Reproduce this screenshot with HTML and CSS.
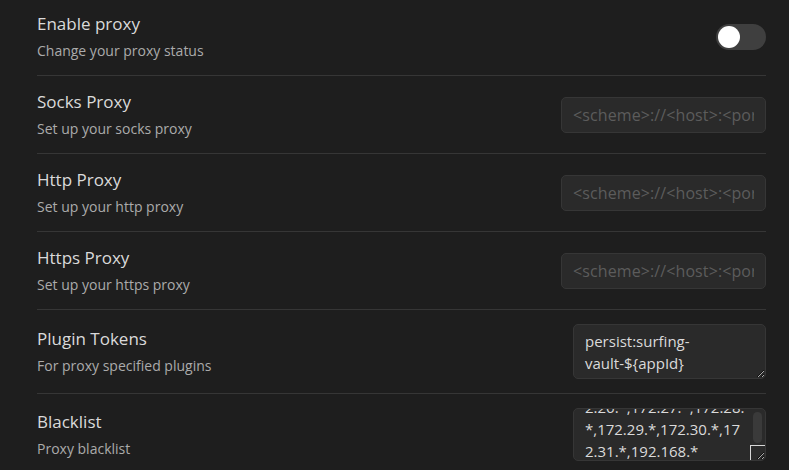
FILE: index.html
```html
<!DOCTYPE html>
<html lang="en">
<head>
  <meta charset="UTF-8">
  <meta name="viewport" content="width=device-width, initial-scale=1.0">
  <title>Proxy Settings</title>
  <link rel="stylesheet" href="styles.css">
</head>
<body>
  <div class="settings">
    <div class="setting-item first">
      <div class="setting-item-info">
        <div class="setting-item-name">Enable proxy</div>
        <div class="setting-item-description">Change your proxy status</div>
      </div>
      <div class="setting-item-control">
        <div class="checkbox-container"><span class="knob"></span></div>
      </div>
    </div>

    <div class="setting-item">
      <div class="setting-item-info">
        <div class="setting-item-name">Socks Proxy</div>
        <div class="setting-item-description">Set up your socks proxy</div>
      </div>
      <div class="setting-item-control">
        <input type="text" placeholder="<scheme>://<host>:<port>">
      </div>
    </div>

    <div class="setting-item">
      <div class="setting-item-info">
        <div class="setting-item-name">Http Proxy</div>
        <div class="setting-item-description">Set up your http proxy</div>
      </div>
      <div class="setting-item-control">
        <input type="text" placeholder="<scheme>://<host>:<port>">
      </div>
    </div>

    <div class="setting-item">
      <div class="setting-item-info">
        <div class="setting-item-name">Https Proxy</div>
        <div class="setting-item-description">Set up your https proxy</div>
      </div>
      <div class="setting-item-control">
        <input type="text" placeholder="<scheme>://<host>:<port>">
      </div>
    </div>

    <div class="setting-item">
      <div class="setting-item-info">
        <div class="setting-item-name">Plugin Tokens</div>
        <div class="setting-item-description">For proxy specified plugins</div>
      </div>
      <div class="setting-item-control">
        <textarea class="tokens">persist:surfing-vault-${appId}</textarea>
      </div>
    </div>

    <div class="setting-item">
      <div class="setting-item-info">
        <div class="setting-item-name">Blacklist</div>
        <div class="setting-item-description">Proxy blacklist</div>
      </div>
      <div class="setting-item-control">
        <div class="textarea-wrap">
          <textarea class="blacklist" id="blacklist">localhost,127.*,10.*,172.16.*,172.17.*,172.18.*,172.19.*,172.20.*,172.21.*,172.22.*,172.23.*,172.24.*,172.25.*,172.26.*,172.27.*,172.28.*,172.29.*,172.30.*,172.31.*,192.168.*</textarea>
          <span class="scroll-thumb"></span>
          <span class="scroll-corner"></span>
        </div>
      </div>
    </div>
  </div>

  <script>
    // keep the blacklist scrolled near the end, like after editing
    const blacklist = document.getElementById("blacklist");
    blacklist.scrollTop = blacklist.scrollHeight - blacklist.clientHeight - 7;
    blacklist.scrollLeft = 0;
  </script>
</body>
</html>
```

FILE: styles.css
```css
/* General styles */
html, body {
  height: 100%;
}

body {
  margin: 0;
  background-color: #1e1e1e;
  color: #dadada;
  font-family: "Open Sans", "Noto Sans", sans-serif;
  overflow: hidden;
  color-scheme: dark;
}

.settings {
  padding: 0 23px 0 37px;
}

/* Setting rows */
.setting-item {
  display: flex;
  align-items: center;
  padding: 14px 0;
  border-top: 1px solid #363636;
}

.setting-item.first {
  border-top: none;
  padding-top: 12px;
}

.setting-item-info {
  flex: 1;
}

.setting-item-name {
  font-size: 17px;
  line-height: 24px;
  color: #dadada;
}

.setting-item-description {
  font-size: 14px;
  line-height: 20px;
  margin-top: 5px;
  color: #ababab;
}

.setting-item-control {
  display: flex;
  justify-content: flex-end;
}

/* Toggle */
.checkbox-container {
  position: relative;
  width: 50px;
  height: 26px;
  border-radius: 13px;
  background-color: #3f3f3f;
}

.checkbox-container .knob {
  position: absolute;
  left: 2px;
  top: 2px;
  width: 22px;
  height: 22px;
  border-radius: 50%;
  background-color: #fff;
}

/* Inputs */
input,
textarea {
  box-sizing: border-box;
  background-color: #2a2a2a;
  border: 1px solid #363636;
  border-radius: 5px;
  color: #dadada;
  font-family: "Open Sans", "Noto Sans", sans-serif;
  outline: none;
}

input {
  width: 205px;
  height: 36px;
  padding: 0 11px;
  font-size: 16px;
  letter-spacing: 0.1px;
}

input::placeholder {
  color: #5c5c5c;
}

textarea {
  width: 193px;
  padding: 5px 11px;
  font-size: 15px;
  line-height: 22px;
}

textarea.tokens {
  height: 55px;
  overflow: hidden;
}

/* Blacklist with its scrollbar */
.textarea-wrap {
  position: relative;
  display: flex;
}

textarea.blacklist {
  height: 53px;
  padding-right: 19px;
  overflow: hidden;
}

.scroll-thumb {
  position: absolute;
  top: 4px;
  right: 4px;
  width: 9px;
  height: 31px;
  border-radius: 5px;
  background-color: #3a3a3a;
}

.scroll-corner {
  position: absolute;
  right: 1px;
  bottom: 1px;
  width: 15px;
  height: 15px;
  box-sizing: border-box;
  border-left: 1px solid #d6d6d6;
  border-top: 1px solid #d6d6d6;
  pointer-events: none;
}
```
